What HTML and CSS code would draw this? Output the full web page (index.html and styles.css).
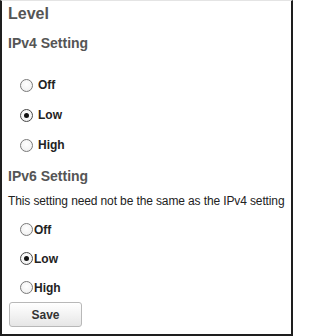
FILE: index.html
```html
<!DOCTYPE html>
<html lang="en">
<head>
<meta charset="utf-8">
<title>Level</title>
<link rel="stylesheet" href="styles.css">
</head>
<body>
<div class="frame">
  <h1 class="title">Level</h1>
  <h2 class="heading h-ipv4">IPv4 Setting</h2>
  <div class="radios radios-v4">
    <label class="row"><input type="radio" name="v4" class="radio"><span class="lbl">Off</span></label>
    <label class="row"><input type="radio" name="v4" class="radio" checked><span class="lbl">Low</span></label>
    <label class="row"><input type="radio" name="v4" class="radio"><span class="lbl">High</span></label>
  </div>
  <h2 class="heading h-ipv6">IPv6 Setting</h2>
  <p class="desc">This setting need not be the same as the IPv4 setting</p>
  <div class="radios radios-v6">
    <label class="row"><input type="radio" name="v6" class="radio"><span class="lbl">Off</span></label>
    <label class="row"><input type="radio" name="v6" class="radio" checked><span class="lbl">Low</span></label>
    <label class="row"><input type="radio" name="v6" class="radio"><span class="lbl">High</span></label>
  </div>
  <button class="save" type="button">Save</button>
</div>
</body>
</html>
```
FILE: styles.css
```css
html, body {
  margin: 0;
  padding: 0;
  background: #fff;
}
.frame {
  box-sizing: border-box;
  width: 293px;
  height: 336px;
  border-left: 2px solid #1e1e1e;
  border-right: 2px solid #1e1e1e;
  border-bottom: 2px solid #1e1e1e;
  border-top: 1px solid #e4e4e4;
  padding: 3px 0 0 6px;
  display: flex;
  flex-direction: column;
  align-items: flex-start;
  font-family: "Liberation Sans", Arial, sans-serif;
  color: #222;
}
.title {
  margin: 0;
  font-size: 16px;
  line-height: 20px;
  font-weight: bold;
  color: #555;
}
.heading {
  margin: 0;
  font-size: 14px;
  line-height: 18px;
  font-weight: bold;
  color: #555;
}
.h-ipv4 { margin-top: 10px; }
.h-ipv6 { margin-top: 7px; }
.radios {
  display: flex;
  flex-direction: column;
  padding-left: 12px;
}
.radios-v4 { margin-top: 18px; }
.radios-v6 { margin-top: 6px; }
.row {
  display: flex;
  align-items: center;
  height: 30px;
  font-size: 12px;
  font-weight: bold;
  color: #222;
}
.radios-v6 .row { height: 29px; }
.radio {
  appearance: none;
  -webkit-appearance: none;
  box-sizing: border-box;
  width: 13px;
  height: 13px;
  margin: 0;
  border: 1px solid #7a7a7a;
  border-radius: 50%;
  background: radial-gradient(circle at 50% 40%, #ffffff 0%, #f4f4f4 60%, #e2e2e2 100%);
  position: relative;
  flex: none;
}
.radio:checked {
  border-color: #4a4a4a;
}
.radio:checked::after {
  content: "";
  position: absolute;
  left: 3px;
  top: 3px;
  width: 5px;
  height: 5px;
  border-radius: 50%;
  background: #111;
}
.radios-v4 .lbl { margin-left: 5px; }
.radios-v6 .lbl { margin-left: 1px; }
.desc {
  margin: 8px 0 0 0;
  font-size: 12px;
  letter-spacing: -0.12px;
  line-height: 16px;
  white-space: nowrap;
  color: #222;
}
.save {
  margin: 0 0 0 1px;
  width: 73px;
  height: 25px;
  padding: 0;
  border: 1px solid #b8b8b8;
  border-radius: 3px;
  background: linear-gradient(#ffffff, #f3f3f3 50%, #e6e6e6);
  font-family: "Liberation Sans", Arial, sans-serif;
  font-size: 12px;
  font-weight: bold;
  color: #333;
}
```
